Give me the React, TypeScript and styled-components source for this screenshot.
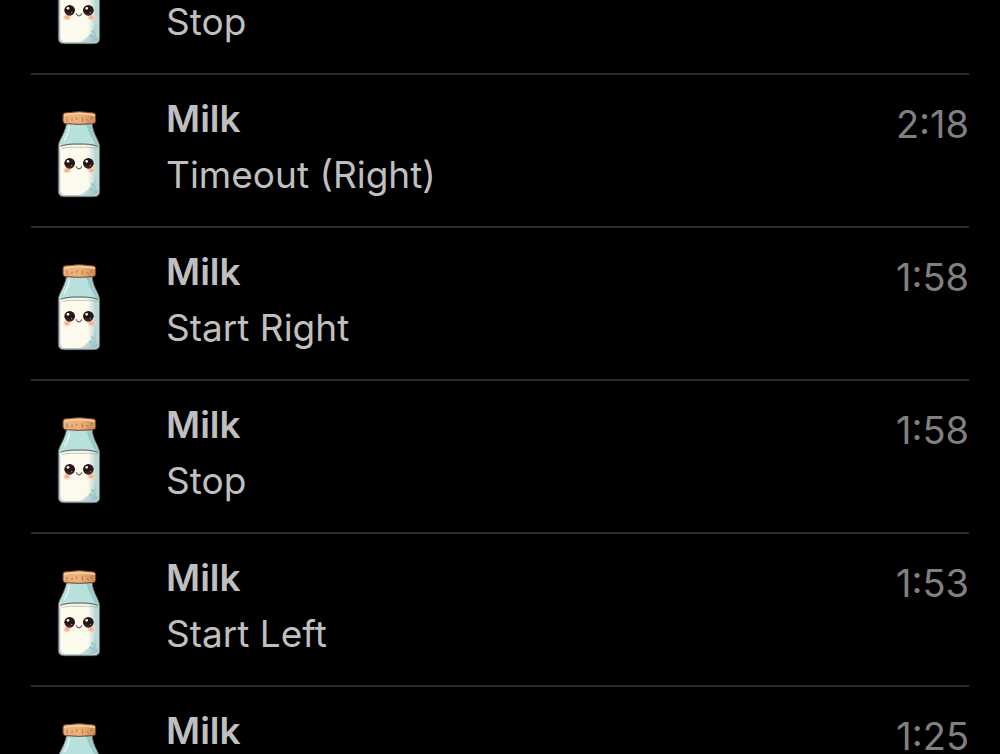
import React from "react";
import styled, { createGlobalStyle } from "styled-components";

const GlobalStyle = createGlobalStyle`
  body {
    margin: 0;
    background: #000;
    font-family: Inter, "Liberation Sans", sans-serif;
  }
`;

const Screen = styled.main`
  height: 100vh;
  overflow: hidden;
  padding: 0 31px;
  background: #000;
`;

/* The list is scrolled part of the way through its first entry. */
const List = styled.ul`
  list-style: none;
  margin: -78px 0 0;
  padding: 0;
`;

const Row = styled.li`
  display: flex;
  align-items: flex-start;
  box-sizing: border-box;
  min-height: 153px;
  padding: 16px 0 0 26px;
  border-bottom: 2px solid #2b2b2d;
`;

const Bottle = styled.svg`
  flex: none;
  width: 44px;
  height: 88px;
  margin: 19px 65px 0 0;
`;

const Details = styled.div`
  flex: 1;
  min-width: 0;
`;

const Title = styled.h2`
  margin: 0;
  font-size: 37px;
  font-weight: 600;
  line-height: 56px;
  color: #bfbfbf;
`;

const Note = styled.p`
  margin: 0;
  font-size: 37px;
  line-height: 56px;
  color: #bfbfbf;
`;

const Time = styled.time`
  margin-top: 5px;
  font-size: 38px;
  line-height: 56px;
  color: #808080;
`;

function MilkBottle() {
  return (
    <Bottle viewBox="51 33 132 264" role="img" aria-label="Milk bottle">
      <defs>
        <linearGradient id="cork" x1="0" x2="1" y1="0" y2="0">
          <stop offset="0" stopColor="#eeb27b" />
          <stop offset="0.55" stopColor="#eab07a" />
          <stop offset="1" stopColor="#cf8a58" />
        </linearGradient>
        <linearGradient id="milk" x1="0" x2="1" y1="0" y2="0">
          <stop offset="0" stopColor="#fdfbee" />
          <stop offset="0.74" stopColor="#fcfaeb" />
          <stop offset="0.86" stopColor="#cfe5df" />
          <stop offset="1" stopColor="#a5cbcd" />
        </linearGradient>
        <linearGradient id="shade" x1="0.3" x2="1" y1="0.6" y2="1">
          <stop offset="0" stopColor="#cfe6de" />
          <stop offset="1" stopColor="#8dbcc6" />
        </linearGradient>
        <radialGradient id="blush">
          <stop offset="0" stopColor="#f5a984" />
          <stop offset="0.5" stopColor="#f8bd9c" />
          <stop offset="1" stopColor="#fde3cf" stopOpacity="0" />
        </radialGradient>
      </defs>
      <path
        d="M80 72C77 90 70 104 62 120C56 131 55 137 55 150V276C55 288 61 293 73 293H162C174 293 179 287 179 276V150C179 137 176 129 171 119C163 104 158 91 156 72Z"
        fill="#b9d9d7"
        stroke="#66605f"
        strokeWidth="3"
      />
      <path d="M82 72C79 91 71 108 63 124C60 130 59 135 59 141H175C174 133 171 127 167 119C160 104 155 90 153 72Z" fill="#b8e0dc" />
      <path d="M134 74C143 78 142 92 153 111L166 137H174C173 132 170 125 166 118C159 104 155 91 153 74Z" fill="#98c8c9" />
      <path d="M88 84C86 100 80 111 74 123" fill="none" stroke="#e1f3ee" strokeWidth="5" strokeLinecap="round" />
      <path d="M60 142Q117 134 174 142V275C174 284 170 288 161 288H73C64 288 60 284 60 275Z" fill="url(#milk)" />
      <path d="M118 288C140 279 156 264 166 235L174 215V275C174 284 170 288 161 288Z" fill="url(#shade)" />
      <path d="M150 268L156 272M160 258L154 254" fill="none" stroke="#86b2ba" strokeWidth="3" strokeLinecap="round" />
      <path d="M61 142Q80 134 117 135Q154 134 174 142" fill="none" stroke="#5d605c" strokeWidth="3" />
      <path d="M64 148Q90 143 118 145Q148 143 170 148" fill="none" stroke="#aaa79b" strokeWidth="2" />
      <path d="M59 151V272Q59 289 73 290H160" fill="none" stroke="#b3c8ca" strokeWidth="4" />
      <path d="M64 154V274" stroke="#ffffff" strokeWidth="3" opacity="0.8" />
      <path d="M171 151V274" stroke="#c7e3e1" strokeWidth="3" />

      <ellipse cx="81" cy="214" rx="14" ry="11" fill="url(#blush)" />
      <ellipse cx="154" cy="214" rx="14" ry="11" fill="url(#blush)" />
      <circle cx="89" cy="193" r="16" fill="#251519" />
      <circle cx="145" cy="193" r="16" fill="#251519" />
      <path d="M80 200Q89 210 98 200M136 200Q145 210 154 200" fill="none" stroke="#65332f" strokeWidth="3" />
      <circle cx="84" cy="187" r="4" fill="#fff9ef" />
      <circle cx="140" cy="187" r="4" fill="#fff9ef" />
      <circle cx="95" cy="199" r="2" fill="#b98b85" />
      <circle cx="151" cy="199" r="2" fill="#b98b85" />
      <path d="M109 203Q111 210 117 210Q123 210 125 203" fill="none" stroke="#49332f" strokeWidth="3" strokeLinecap="round" />

      <path
        d="M73 42Q118 34 162 42Q168 44 167 52V65Q167 73 159 74Q117 78 77 74Q69 73 69 65V51Q69 44 73 42Z"
        fill="url(#cork)"
        stroke="#70412d"
        strokeWidth="3"
      />
      <path d="M74 48Q117 40 162 48" fill="none" stroke="#f7c994" strokeWidth="6" strokeLinecap="round" />
      <path d="M81 57V67M96 60V65M110 57V61M127 56V67M141 61L146 68M154 54V62" fill="none" stroke="#b5734a" strokeWidth="3" strokeLinecap="round" />
    </Bottle>
  );
}

type Entry = { note?: string; time?: string };

const entries: Entry[] = [
  { note: "Stop" },
  { note: "Timeout (Right)", time: "2:18" },
  { note: "Start Right", time: "1:58" },
  { note: "Stop", time: "1:58" },
  { note: "Start Left", time: "1:53" },
  { time: "1:25" },
];

export default function App() {
  return (
    <>
      <GlobalStyle />
      <Screen>
        <List>
          {entries.map((entry, index) => (
            <Row key={index}>
              <MilkBottle />
              <Details>
                <Title>Milk</Title>
                {entry.note && <Note>{entry.note}</Note>}
              </Details>
              {entry.time && <Time>{entry.time}</Time>}
            </Row>
          ))}
        </List>
      </Screen>
    </>
  );
}
